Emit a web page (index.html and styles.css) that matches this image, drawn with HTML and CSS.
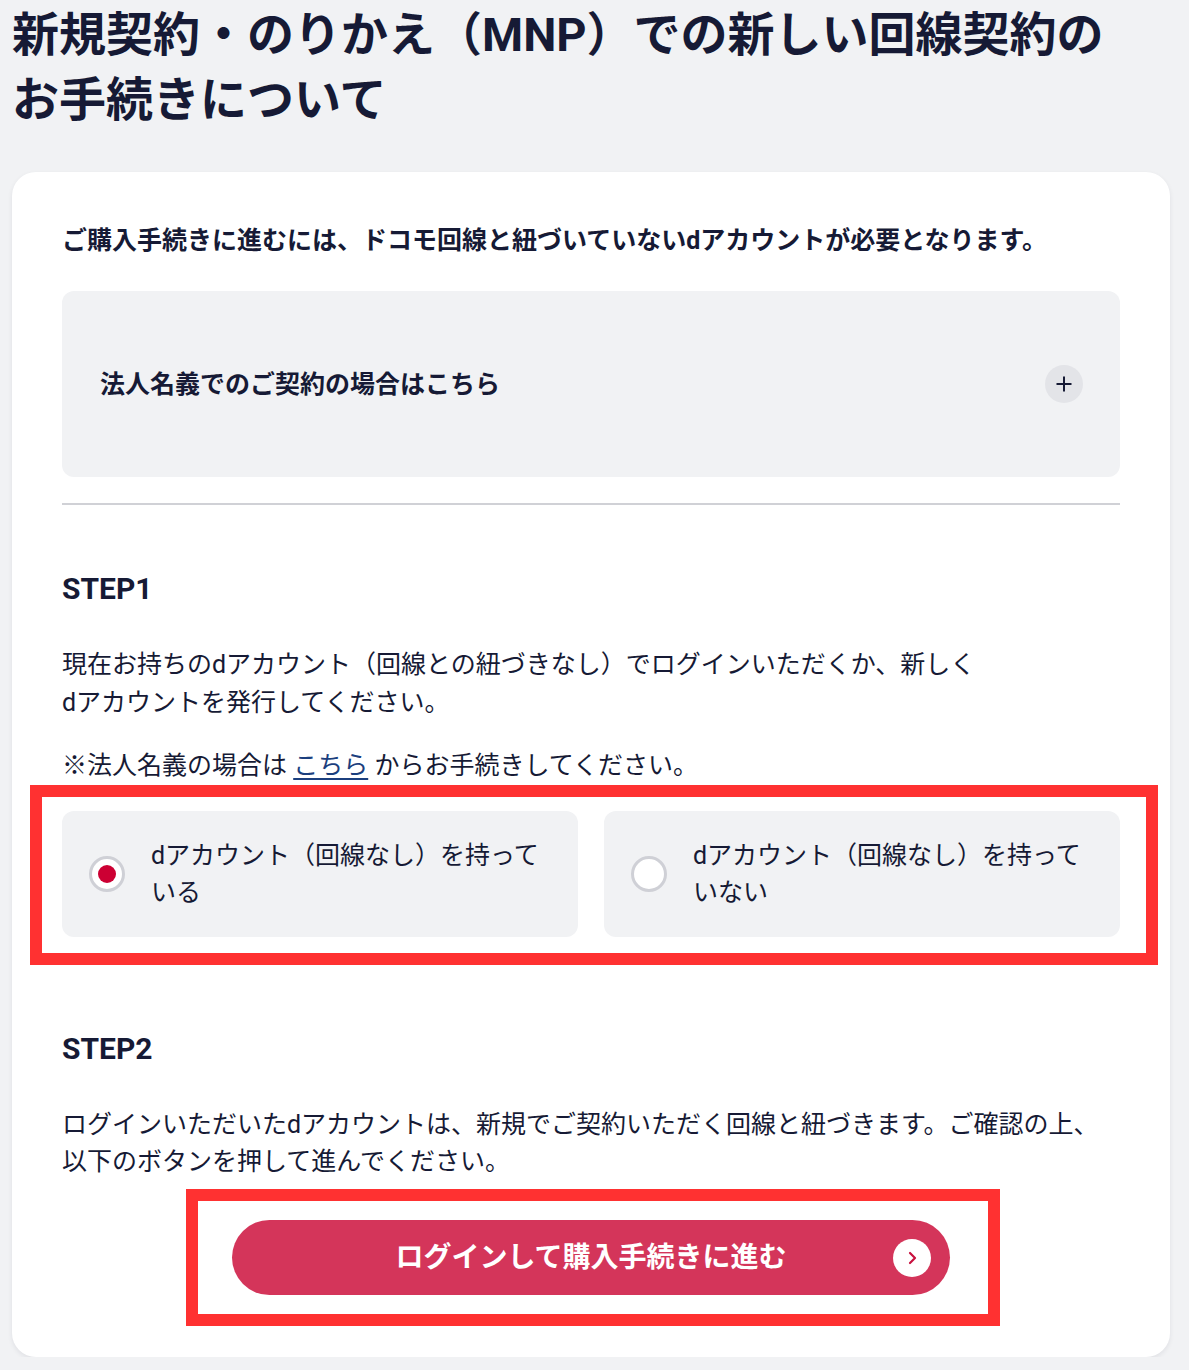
FILE: index.html
```html
<!DOCTYPE html>
<html lang="ja">
<head>
<meta charset="utf-8">
<title>新規契約・のりかえ（MNP）での新しい回線契約のお手続きについて</title>
<link rel="stylesheet" href="styles.css">
</head>
<body>
<div class="page">
  <h1 class="title">新規契約・のりかえ（MNP）での新しい回線契約の<br>お手続きについて</h1>
  <section class="card">
    <p class="lead">ご購入手続きに進むには、ドコモ回線と紐づいていないdアカウントが必要となります。</p>
    <div class="accordion">
      <span class="accordion-label">法人名義でのご契約の場合はこちら</span>
      <span class="plus">
        <svg width="18" height="18" viewBox="0 0 18 18"><path d="M9 1.5v15M1.5 9h15" stroke="#161a35" stroke-width="2" fill="none"/></svg>
      </span>
    </div>
    <hr class="divider">
    <h2 class="step">STEP1</h2>
    <p class="para">現在お持ちのdアカウント（回線との紐づきなし）でログインいただくか、新しく<br>dアカウントを発行してください。</p>
    <p class="note">※法人名義の場合は <a class="link" href="#">こちら</a> からお手続きしてください。</p>
    <div class="mark mark-options">
      <div class="options">
        <label class="option">
          <span class="radio radio-on"><span class="dot"></span></span>
          <span class="option-text">dアカウント（回線なし）を持っている</span>
        </label>
        <label class="option">
          <span class="radio"></span>
          <span class="option-text">dアカウント（回線なし）を持っていない</span>
        </label>
      </div>
    </div>
    <h2 class="step step2">STEP2</h2>
    <p class="para para2">ログインいただいたdアカウントは、新規でご契約いただく回線と紐づきます。ご確認の上、以下のボタンを押して進んでください。</p>
    <div class="btn-row">
      <div class="mark mark-btn">
        <a class="btn" href="#">
          <span></span>
          <span class="btn-text">ログインして購入手続きに進む</span>
          <span class="btn-arrow">
            <svg width="16" height="16" viewBox="0 0 16 16"><path d="M6 3l5 5-5 5" stroke="#c8103e" stroke-width="2.2" fill="none" stroke-linecap="round" stroke-linejoin="round"/></svg>
          </span>
        </a>
      </div>
    </div>
  </section>
</div>
</body>
</html>
```
FILE: styles.css
```css
* { box-sizing: border-box; }
html, body { margin: 0; padding: 0; }
body {
  background: #f1f2f4;
  color: #161a35;
  font-family: Roboto, "Noto Sans CJK JP", sans-serif;
}
.page {
  padding: 0 19px 0 12px;
}
.title {
  margin: 2px 0 0;
  font-size: 47px;
  font-weight: 700;
  line-height: 65px;
}
.card {
  margin-top: 39.5px;
  background: #fff;
  border-radius: 24px;
  padding: 50px 50px 31px;
  box-shadow: 0 2px 5px rgba(20, 26, 53, 0.08);
}
.lead {
  margin: 0;
  font-size: 25px;
  font-weight: 700;
  line-height: 37px;
}
.accordion {
  margin-top: 32.5px;
  background: #f1f2f4;
  border-radius: 12px;
  padding: 74px 37px 74px 38px;
  display: flex;
  align-items: center;
  justify-content: space-between;
}
.accordion-label {
  font-size: 25px;
  font-weight: 700;
  line-height: 37px;
}
.plus {
  width: 38px;
  height: 38px;
  border-radius: 50%;
  background: #e3e4e8;
  display: flex;
  align-items: center;
  justify-content: center;
}
.divider {
  margin: 26px 0 0;
  border: 0;
  height: 2px;
  background: #d0d1d6;
}
.step {
  margin: 63.5px 0 0;
  font-size: 30px;
  font-weight: 700;
  line-height: 39px;
}
.para {
  margin: 38.5px 0 0;
  font-size: 25px;
  line-height: 38px;
}
.para2 {
  line-height: 37px;
}
.note {
  margin: 25px 0 0;
  font-size: 25px;
  line-height: 38px;
}
.link {
  color: #1b3f7e;
  text-decoration: underline;
  text-underline-offset: 4px;
}
.mark {
  border: 12px solid #ff3131;
}
.mark-options {
  margin: 0 -38px 0 -32px;
  padding: 14px 26px 16px 20px;
}
.options {
  display: grid;
  grid-template-columns: 1fr 1fr;
  gap: 26px;
}
.option {
  background: #f1f2f4;
  border-radius: 12px;
  padding: 26px 20px 26px 27px;
  display: flex;
  align-items: center;
  gap: 26px;
}
.option-text {
  font-size: 25px;
  line-height: 37px;
}
.radio {
  flex: none;
  width: 36px;
  height: 36px;
  border-radius: 50%;
  border: 3px solid #cfd0d6;
  background: #fff;
  display: flex;
  align-items: center;
  justify-content: center;
}
.dot {
  width: 18px;
  height: 18px;
  border-radius: 50%;
  background: #cc0033;
}
.btn-row {
  margin-top: 9px;
  padding-left: 4px;
  display: flex;
  justify-content: center;
}
.mark-btn {
  padding: 19px 38px 19px 34px;
}
.btn {
  width: 718px;
  height: 75px;
  border-radius: 38px;
  background: #d4355a;
  color: #fff;
  text-decoration: none;
  display: grid;
  grid-template-columns: 1fr auto 1fr;
  align-items: center;
}
.btn-text {
  font-size: 28px;
  font-weight: 700;
  line-height: 40px;
}
.btn-arrow {
  justify-self: end;
  margin-right: 19px;
  width: 38px;
  height: 38px;
  border-radius: 50%;
  background: #fff;
  display: flex;
  align-items: center;
  justify-content: center;
}
```
